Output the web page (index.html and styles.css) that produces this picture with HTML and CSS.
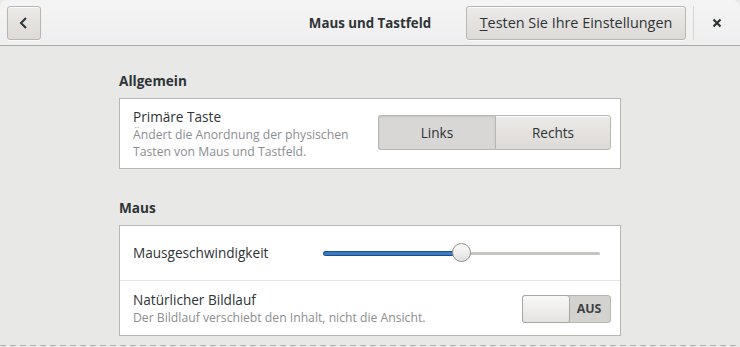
FILE: index.html
```html
<!DOCTYPE html>
<html lang="de">
<head>
    <meta charset="UTF-8">
    <title>Maus und Tastfeld</title>
    <link rel="stylesheet" href="styles.css">
</head>
<body>
    <div class="window">
        <header class="headerbar">
            <button class="btn back-btn" aria-label="Zurück">
                <svg width="16" height="16" viewBox="0 0 16 16"><path d="M10 3 L5 8 L10 13" fill="none" stroke="#2e3436" stroke-width="2"/></svg>
            </button>
            <div class="title">Maus und Tastfeld</div>
            <div class="spacer"></div>
            <button class="btn test-btn"><u>T</u>esten Sie Ihre Einstellungen</button>
            <div class="sep"></div>
            <button class="close-btn" aria-label="Schließen">
                <svg width="12" height="12" viewBox="0 0 12 12"><path d="M2.5 2.5 L9.5 9.5 M9.5 2.5 L2.5 9.5" stroke="#2e3436" stroke-width="2.2"/></svg>
            </button>
        </header>

        <main class="content">
            <section class="group">
                <h2>Allgemein</h2>
                <div class="frame">
                    <div class="row row-primary">
                        <div class="labels">
                            <div class="label">Primäre Taste</div>
                            <div class="sub">Ändert die Anordnung der physischen<br>Tasten von Maus und Tastfeld.</div>
                        </div>
                        <div class="linked">
                            <button class="btn seg active">Links</button>
                            <button class="btn seg">Rechts</button>
                        </div>
                    </div>
                </div>
            </section>

            <section class="group">
                <h2>Maus</h2>
                <div class="frame">
                    <div class="row row-speed">
                        <div class="label">Mausgeschwindigkeit</div>
                        <div class="slider">
                            <div class="trough"><div class="fill" style="width: 50%"></div></div>
                            <div class="knob" style="left: 50%"></div>
                        </div>
                    </div>
                    <div class="row row-scroll">
                        <div class="labels">
                            <div class="label">Natürlicher Bildlauf</div>
                            <div class="sub">Der Bildlauf verschiebt den Inhalt, nicht die Ansicht.</div>
                        </div>
                        <div class="switch">
                            <div class="slider-handle"></div>
                            <div class="state">AUS</div>
                        </div>
                    </div>
                </div>
            </section>
        </main>
        <div class="dashes"></div>
    </div>
</body>
</html>
```

FILE: styles.css
```css
:root {
    --fg: #2e3436;
    --dim: #8b8e8f;
    --bg: #e8e8e7;
    --border: #b6b6b3;
}
html, body {
    margin: 0;
    height: 100%;
    background: var(--bg);
    font-family: 'Open Sans', 'Noto Sans', sans-serif;
    font-size: 13.6px;
    color: var(--fg);
}
.window {
    height: 347px;
    overflow: hidden;
    background: var(--bg);
}
.btn {
    font-family: inherit;
    font-size: 13.6px;
    color: var(--fg);
    border: 1px solid #b6b6b3;
    border-radius: 3px;
    background: linear-gradient(#edebe9, #dcd9d6);
    box-shadow: inset 0 1px rgba(255,255,255,0.8), 0 1px rgba(255,255,255,0.6);
    padding: 0;
    box-sizing: border-box;
}
.headerbar {
    height: 46px;
    box-sizing: border-box;
    display: flex;
    align-items: center;
    padding: 0 6px 0 7px;
    background: linear-gradient(#f4f4f4, #efefef);
    border-bottom: 1px solid #a9a9a5;
    border-radius: 7px 7px 0 0;
    position: relative;
}
.back-btn {
    width: 34px;
    height: 34px;
    display: flex;
    align-items: center;
    justify-content: center;
}
/* title is centred on the whole bar, over the flex row */
.title {
    position: absolute;
    left: 0;
    right: 0;
    text-align: center;
    font-weight: bold;
    font-size: 13.3px;
    pointer-events: none;
}
.spacer {
    flex: 1;
}
.test-btn {
    height: 34px;
    width: 220px;
    margin-right: 7px;
    font-size: 14.4px;
}
.test-btn u {
    text-decoration-thickness: 1px;
    text-underline-offset: 2px;
}
.sep {
    width: 1px;
    height: 34px;
    background: #d6d6d3;
}
.close-btn {
    width: 40px;
    height: 34px;
    border: none;
    background: none;
    display: flex;
    align-items: center;
    justify-content: center;
    padding: 0 0 0 6px;
}
.content {
    width: 502px;
    margin: 0 auto;
    padding-top: 26px;
}
.group h2 {
    font-size: 13.6px;
    font-weight: bold;
    margin: 0 0 9px;
    line-height: 17px;
}
.group + .group {
    margin-top: 30px;
}
.frame {
    background: #fff;
    border: 1px solid var(--border);
}
.row {
    display: flex;
    align-items: center;
    padding: 0 9px 0 13px;
}
.row-primary {
    height: 69px;
}
.labels {
    flex: 1;
}
.label {
    line-height: 18px;
}
.sub {
    color: var(--dim);
    font-size: 12.2px;
    line-height: 17px;
}
.linked {
    display: flex;
    margin-top: -2px;
}
.seg {
    width: 117px;
    height: 35px;
}
.seg.active {
    background: #d8d7d5;
    box-shadow: inset 0 1px 2px rgba(0,0,0,0.08);
    border-radius: 3px 0 0 3px;
    border-right: none;
}
.seg + .seg {
    border-radius: 0 3px 3px 0;
    width: 116px;
}
.row-speed {
    height: 54px;
    border-bottom: 1px solid #e4e4e2;
}
.row-speed .label {
    flex: 1;
}
.slider {
    position: relative;
    width: 276px;
    height: 22px;
    margin-right: 11px;
    display: flex;
    align-items: center;
}
.trough {
    width: 100%;
    height: 3px;
    border-radius: 2px;
    background: #c4c4c1;
}
.fill {
    height: 100%;
    background: #3a7ac2;
    border-radius: 2px;
    box-shadow: 0 0 0 1px #1c4f86;
}
.knob {
    position: absolute;
    top: 1px;
    width: 19px;
    height: 19px;
    margin-left: -10px;
    border-radius: 50%;
    border: 1px solid #8f8f8b;
    background: linear-gradient(#fbfbfa, #e2e1df);
    box-sizing: border-box;
}
.row-scroll {
    height: 54px;
}
.switch {
    display: flex;
    width: 89px;
    height: 28px;
    box-sizing: border-box;
    border: 1px solid #b6b6b3;
    border-radius: 3px;
    background: #d3d2cf;
    position: relative;
    margin-top: 1px;
}
.slider-handle {
    width: 46px;
    margin: -1px 0 -1px -1px;
    border: 1px solid #a7a7a3;
    border-radius: 3px;
    background: linear-gradient(#f8f8f7, #e4e3e1);
}
.state {
    flex: 1;
    display: flex;
    align-items: center;
    justify-content: center;
    font-weight: bold;
    font-size: 12.4px;
    color: #3d4143;
    padding-right: 2px;
}
.dashes {
    margin-top: 9px;
    height: 1px;
    background: repeating-linear-gradient(90deg, #b0b0ad 0 6px, transparent 6px 10px);
}
```
